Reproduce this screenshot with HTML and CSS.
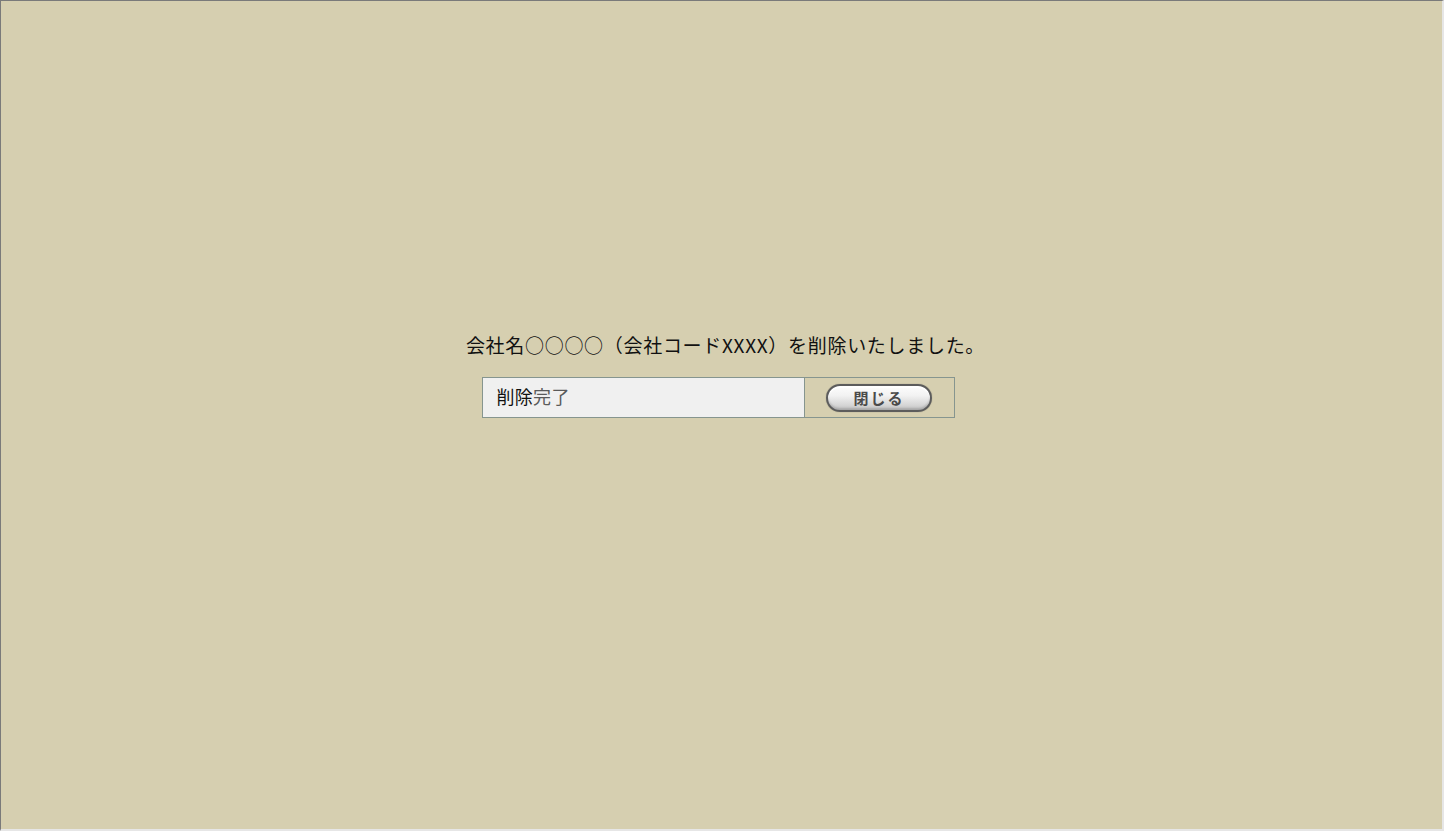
FILE: index.html
```html
<!DOCTYPE html>
<html lang="ja">
<head>
<meta charset="utf-8">
<title>削除完了</title>
<link rel="stylesheet" href="styles.css">
</head>
<body>
<div class="frame">
  <main class="content">
    <p class="message">会社名○○○○（会社コードXXXX）を削除いたしました。</p>
    <div class="result">
      <div class="result-label"><span class="strong">削除</span><span class="weak">完了</span></div>
      <div class="result-action">
        <button class="close-btn" type="button">閉じる</button>
      </div>
    </div>
  </main>
</div>
</body>
</html>
```
FILE: styles.css
```css
html, body {
  margin: 0;
  padding: 0;
  height: 100%;
}
body {
  font-family: "Noto Sans CJK JP", "Liberation Sans", sans-serif;
  background: #d6cfb0;
}
.frame {
  box-sizing: border-box;
  height: 831px;
  border-top: 1px solid #7a7a7a;
  border-left: 1px solid #7a7a7a;
  border-right: 2px solid #e6e6e6;
  border-bottom: 2px solid #e6e6e6;
  background: #d6cfb0;
}
.content {
  display: flex;
  flex-direction: column;
  align-items: center;
  padding-top: 332px;
}
.message {
  margin: 0;
  font-size: 19px;
  line-height: 24px;
  letter-spacing: 0.7px;
  color: #111;
  margin-left: 8px;
}
.result {
  margin-top: 20px;
  margin-right: 7px;
  display: flex;
  width: 473px;
  height: 41px;
  box-sizing: border-box;
  border: 1px solid #86958f;
}
.result-label {
  width: 322px;
  background: #f0f0f0;
  border-right: 1px solid #86958f;
  display: flex;
  align-items: center;
  padding-left: 14px;
  padding-bottom: 3px;
  box-sizing: border-box;
  font-size: 18px;
  letter-spacing: 0.3px;
}
.strong { color: #111; }
.weak { color: #5a5a5a; }
.result-action {
  flex: 1;
  display: flex;
  align-items: center;
  justify-content: center;
}
.close-btn {
  width: 106px;
  height: 28px;
  box-sizing: border-box;
  border: 2px solid #5c5c5c;
  border-radius: 14px;
  background: linear-gradient(#fdfdfd 0%, #f2f2f2 40%, #d9d9d9 75%, #c4c4c4 100%);
  box-shadow: inset 0 -2px 2px rgba(0,0,0,0.15), inset 0 2px 1px #fff, 0 0 1px rgba(0,0,0,0.4);
  font-family: "Noto Sans CJK JP", sans-serif;
  font-weight: bold;
  font-size: 15px;
  line-height: 20px;
  color: #4a4a4a;
  padding: 0;
  letter-spacing: 2px;
  cursor: pointer;
}
```
